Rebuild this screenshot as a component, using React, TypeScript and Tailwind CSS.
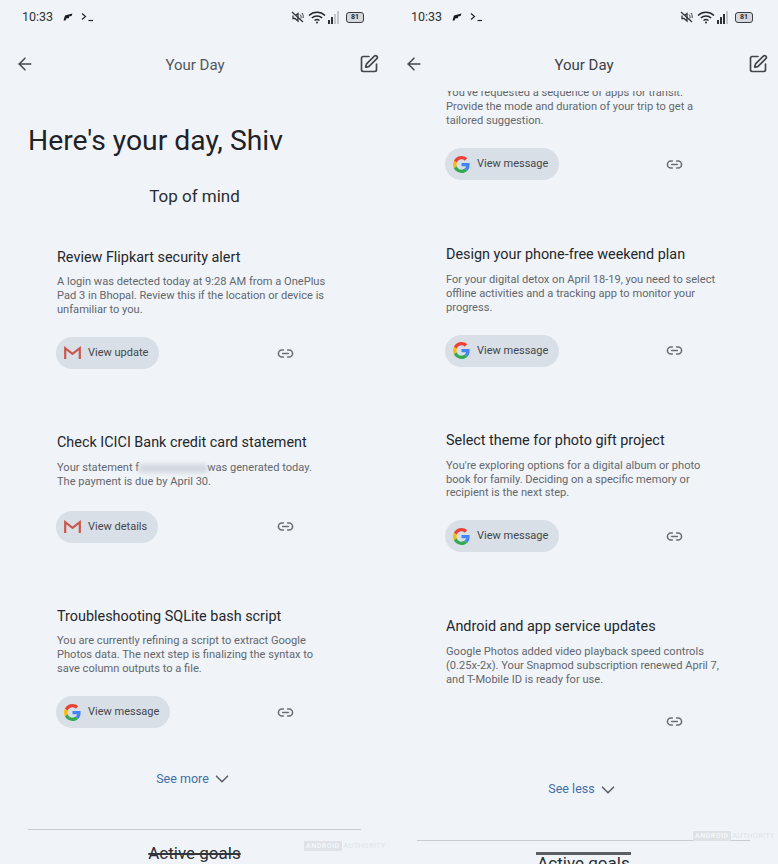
import React from "react";
import { ArrowLeft, ChevronDown, Link2, SquarePen } from "lucide-react";

function GoogleLogo() {
  return (
    <svg width="17" height="17" viewBox="0 0 48 48" className="shrink-0">
      <path fill="#EA4335" d="M24 9.5c3.5 0 6.7 1.2 9.2 3.6l6.9-6.9C35.9 2.4 30.5 0 24 0 14.6 0 6.5 5.4 2.6 13.2l8 6.2C12.5 13.7 17.800 9.500 24 9.500z" />
      <path fill="#4285F4" d="M46.900 24.500c0-1.600-.1-3.100-.4-4.500H24v9h12.900c-.6 3-2.200 5.500-4.700 7.200l7.700 6c4.500-4.200 7-10.300 7-17.700z" />
      <path fill="#FBBC05" d="M10.600 28.600c-.5-1.400-.8-3-.8-4.600s.3-3.200.8-4.600l-8-6.200C.9 16.500 0 20.100 0 24s.9 7.500 2.600 10.800l8-6.200z" />
      <path fill="#34A853" d="M24 48c6.500 0 11.900-2.100 15.900-5.800l-7.700-6c-2.100 1.400-4.900 2.300-8.200 2.300-6.200 0-11.500-4.200-13.400-9.900l-8 6.200C6.500 42.600 14.600 48 24 48z" />
    </svg>
  );
}

function GmailLogo() {
  return (
    <svg width="17" height="14" viewBox="0 0 17 14" className="shrink-0" fill="none">
      <path d="M1.200 13V2.200L8.500 7.800l7.300-5.600V13" stroke="#c9594f" strokeWidth="2.200" strokeLinejoin="miter" />
    </svg>
  );
}

function StatusBar({ darkSignal }: { darkSignal?: boolean }) {
  return (
    <div className="flex h-[34px] shrink-0 items-center pl-[22px] pr-[25px] text-[#2f3235]">
      <span className="text-[12.500px] font-normal">10:33</span>
      <svg width="10" height="8" viewBox="0 0 10 8" className="ml-[10px]">
        <path d="M.5 7.500 2 2.500 9.500.5 8.500 3 6 3.500 6 5.200 3.500 5.200 2.500 7.500z" fill="#181b1f" />
      </svg>
      <svg width="13" height="10" viewBox="0 0 13 10" className="ml-[8px]" fill="none" stroke="#23262a" strokeWidth="1.200">
        <path d="M1 1.500 4.500 4.500 1 7.500" />
        <path d="M7.500 8.500H12" />
      </svg>
      <div className="ml-auto flex items-center">
        <svg width="13" height="12" viewBox="0 0 13 12" fill="none" stroke="#33363a" strokeWidth="1.300">
          <path d="M1 1 12 11" />
          <path d="M2 4.500v3h2l3 2.500V2.500L5 4" />
          <path d="M9 3.500c1 1 1.400 2.600.8 4M11 2c1.200 1.500 1.500 3.500 1 5" strokeWidth="1" />
        </svg>
        <svg width="18" height="13" viewBox="0 0 18 13" fill="none" stroke="#25282c" className="ml-[4px]">
          <path d="M1 4.500c4.500-4.300 11.500-4.300 16 0" strokeWidth="1.500" />
          <path d="M3.800 7c3-2.700 7.400-2.700 10.400 0" strokeWidth="1.500" />
          <path d="M6.500 9.500c1.500-1.200 3.500-1.200 5 0" strokeWidth="1.400" />
          <circle cx="9" cy="11.500" r="1" fill="#25282c" stroke="none" />
        </svg>
        <div className="ml-[2px] flex h-[13px] items-end gap-[1px]">
          <div className="h-[4px] w-[2px] bg-[#2f3235]" />
          <div className="h-[7px] w-[2px] bg-[#2f3235]" />
          <div className={darkSignal ? "h-[10px] w-[2px] bg-[#2f3235]" : "h-[10px] w-[2px] bg-[#c4c8cc]"} />
          <div className="h-[13px] w-[2px] bg-[#c4c8cc]" />
        </div>
        <div className="ml-[7px] flex h-[11px] w-[18px] items-center justify-center rounded-[3px] border border-[#3a3d41] bg-[#d5d8dc] text-[7px] font-bold leading-none text-[#25282c]">
          81
        </div>
      </div>
    </div>
  );
}

function TopBar({ dark }: { dark?: boolean }) {
  return (
    <div className="mt-[6px] grid h-[48px] shrink-0 grid-cols-[1fr_auto_1fr] items-center pl-[15px] pr-[10px]">
      <ArrowLeft size={20} color="#43474c" strokeWidth={1.800} />
      <span className={dark ? "mt-[2px] -translate-x-[2px] text-[15px] text-[#3d4045]" : "mt-[2px] -translate-x-[2px] text-[15px] text-[#52565b]"}>Your Day</span>
      <SquarePen size={20} color="#43474c" strokeWidth={2} className="justify-self-end" />
    </div>
  );
}

function Chip({ label, logo }: { label: string; logo: "google" | "gmail" }) {
  return (
    <div className="-ml-px inline-flex h-[32px] items-center gap-[7px] rounded-full bg-[#d9dfe7] pl-[8px] pr-[11px] text-[11px] text-[#43474c]">
      {logo === "google" ? <GoogleLogo /> : <GmailLogo />}
      {label}
    </div>
  );
}

function ActionRow({ label, logo }: { label?: string; logo?: "google" | "gmail" }) {
  return (
    <div className="flex h-[32px] items-center">
      <div className="w-[220px]">{label && logo && <Chip label={label} logo={logo} />}</div>
      <Link2 size={17} color="#6b6f74" strokeWidth={2.200} />
    </div>
  );
}

function Body({ children }: { children: React.ReactNode }) {
  return <p className="w-[275px] text-[11.100px] leading-[13.800px] text-[#63676c]">{children}</p>;
}

function Suggestion({
  title,
  children,
  label,
  logo,
  bodyClass = "mt-[7px]",
  actionClass = "mt-[21px]",
}: {
  title: string;
  children: React.ReactNode;
  label?: string;
  logo?: "google" | "gmail";
  bodyClass?: string;
  actionClass?: string;
}) {
  return (
    <div className="flex flex-col">
      <h3 className="text-[14.400px] font-normal leading-[20px] text-[#24272b]">{title}</h3>
      <div className={bodyClass}>
        <Body>{children}</Body>
      </div>
      <div className={actionClass}>
        <ActionRow label={label} logo={logo} />
      </div>
    </div>
  );
}

function SeeToggle({ label, className }: { label: string; className: string }) {
  return (
    <div className={className}>
      {label}
      <ChevronDown size={22} color="#5f6368" strokeWidth={1.800} className="ml-[2px]" />
    </div>
  );
}

function Watermark({ className }: { className: string }) {
  return (
    <div className={className}>
      <span className="bg-[#dfe3e8] px-[2px] text-[7px] font-bold leading-[10px] tracking-[0.5px] text-[#f4f6f9]">ANDROID</span>
      <span className="ml-[2px] text-[7px] leading-[10px] tracking-[0.5px] text-[#dfe3e8]">AUTHORITY</span>
    </div>
  );
}

function LeftPanel() {
  return (
    <div className="relative flex h-[864px] w-[389px] flex-col overflow-hidden">
      <StatusBar />
      <TopBar />
      <h1 className="mt-[35px] shrink-0 pl-[28px] text-[28.300px] font-normal leading-[36px] text-[#1f2226]">Here's your day, Shiv</h1>
      <h2 className="mt-[25px] shrink-0 text-center text-[17px] font-normal leading-[24px] text-[#2a2d31]">Top of mind</h2>
      <div className="mt-[40px] flex shrink-0 flex-col gap-[64px] pl-[57px]">
        <Suggestion title="Review Flipkart security alert" label="View update" logo="gmail">
          A login was detected today at 9:28 AM from a OnePlus Pad 3 in Bhopal. Review this if the location or device is unfamiliar to you.
        </Suggestion>
        <Suggestion title="Check ICICI Bank credit card statement" label="View details" logo="gmail" bodyClass="mt-[8px]" actionClass="mt-[22px]">
          Your statement f
          <span className="inline-block h-[9px] w-[68px] bg-[#d3d8df] align-middle blur-[2px]" />
          was generated today. The payment is due by April 30.
        </Suggestion>
        <Suggestion title="Troubleshooting SQLite bash script" label="View message" logo="google">
          You are currently refining a script to extract Google Photos data. The next step is finalizing the syntax to save column outputs to a file.
        </Suggestion>
      </div>
      <SeeToggle label="See more" className="mt-[41px] flex h-[20px] shrink-0 items-center justify-center text-[12.500px] text-[#3f6fa8]" />
      <div className="mx-[28px] mt-[40px] h-[1px] shrink-0 bg-[#c9cdd2]" />
      <div className="mt-[11px] flex shrink-0 justify-center">
        <span className="text-[17px] leading-[24px] text-[#2a2d31] line-through decoration-[#33363a] decoration-2">Active goals</span>
      </div>
      <Watermark className="absolute left-[304px] top-[841px] flex items-center" />
    </div>
  );
}

function RightPanel() {
  return (
    <div className="relative flex h-[864px] w-[389px] flex-col overflow-hidden">
      <StatusBar darkSignal />
      <div className="pb-[3px]">
        <TopBar dark />
      </div>
      <div className="min-h-0 flex-1 overflow-hidden">
        <div className="-mt-[5px] pl-[57px]">
          <Body>
            You've requested a sequence of apps for transit. Provide the mode and duration of your trip to get a tailored suggestion.
          </Body>
          <div className="mt-[21px]">
            <ActionRow label="View message" logo="google" />
          </div>
          <div className="mt-[65px] flex flex-col gap-[64px]">
            <Suggestion title="Design your phone-free weekend plan" label="View message" logo="google" bodyClass="mt-[8px]" actionClass="mt-[20px]">
              For your digital detox on April 18-19, you need to select offline activities and a tracking app to monitor your progress.
            </Suggestion>
            <Suggestion title="Select theme for photo gift project" label="View message" logo="google" bodyClass="mt-[8px]" actionClass="mt-[20px]">
              You're exploring options for a digital album or photo book for family. Deciding on a specific memory or recipient is the next step.
            </Suggestion>
            <div className="mt-px">
              <Suggestion title="Android and app service updates" bodyClass="mt-[8px]" actionClass="mt-[19px]">
                Google Photos added video playback speed controls (0.25x-2x). Your Snapmod subscription renewed April 7, and T-Mobile ID is ready for use.
              </Suggestion>
            </div>
          </div>
        </div>
        <SeeToggle label="See less" className="mt-[42px] flex h-[20px] items-center justify-center text-[12.500px] text-[#3f6fa8]" />
        <div className="mx-[28px] mt-[40px] h-[1px] bg-[#c9cdd2]" />
        <div className="mt-[10px] flex justify-center">
          <span className="text-[17px] leading-[24px] text-[#2a2d31]">Active goals</span>
        </div>
      </div>
      <div className="absolute left-[147px] top-[852px] h-[3px] w-[95px] bg-[#5c5f63]" />
      <Watermark className="absolute left-[304px] top-[831px] flex items-center" />
    </div>
  );
}

export default function App() {
  return (
    <div className="flex h-[864px] w-[778px] overflow-hidden bg-[#f0f4f9] font-['Roboto',sans-serif]">
      <LeftPanel />
      <RightPanel />
    </div>
  );
}
